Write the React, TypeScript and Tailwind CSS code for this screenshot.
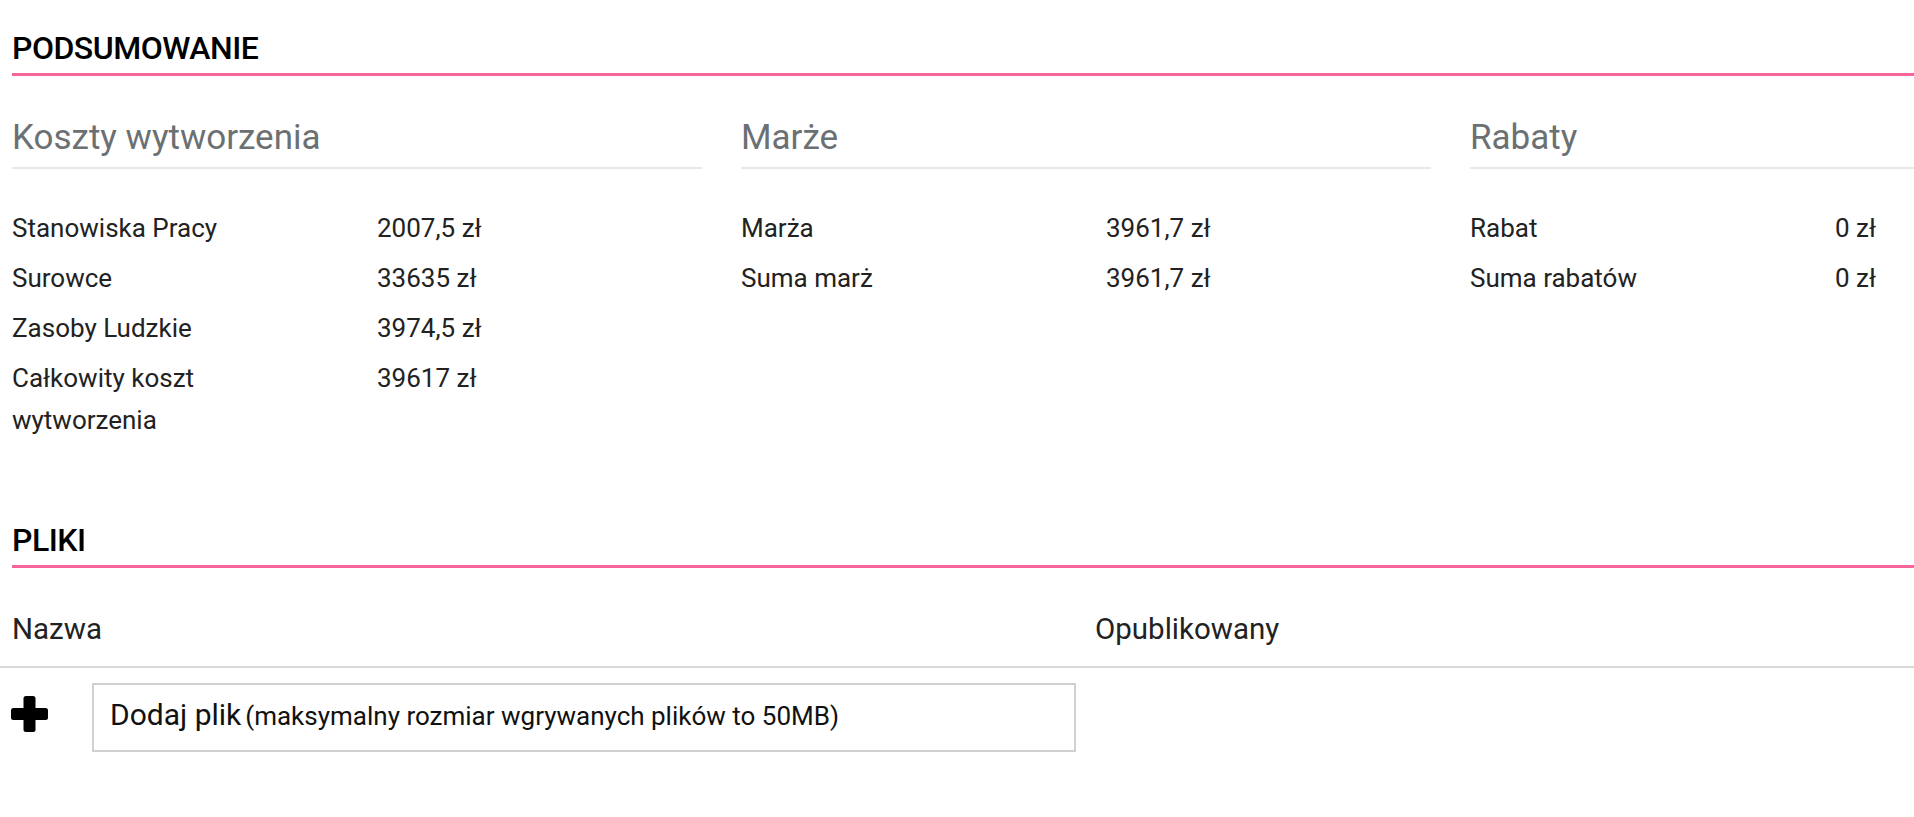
import React from "react";

type Row = { label: string; value: string };

const columns: { title: string; rows: Row[] }[] = [
  {
    title: "Koszty wytworzenia",
    rows: [
      { label: "Stanowiska Pracy", value: "2007,5 zł" },
      { label: "Surowce", value: "33635 zł" },
      { label: "Zasoby Ludzkie", value: "3974,5 zł" },
      { label: "Całkowity koszt wytworzenia", value: "39617 zł" },
    ],
  },
  {
    title: "Marże",
    rows: [
      { label: "Marża", value: "3961,7 zł" },
      { label: "Suma marż", value: "3961,7 zł" },
    ],
  },
  {
    title: "Rabaty",
    rows: [
      { label: "Rabat", value: "0 zł" },
      { label: "Suma rabatów", value: "0 zł" },
    ],
  },
];

function PlusIcon() {
  return (
    <svg width="37" height="36" viewBox="0 0 37 36" className="shrink-0 mb-[7px]">
      <rect x="12.5" y="0" width="12" height="36" rx="2.5" fill="#000" />
      <rect x="0" y="12" width="37" height="12" rx="2.5" fill="#000" />
    </svg>
  );
}

export default function App() {
  return (
    <div className="w-[1914px] h-[817px] overflow-hidden bg-white text-[#222] font-['Roboto','Liberation_Sans',sans-serif] pt-[28px]">
      <section className="pl-3">
        <h2 className="text-[32px] leading-[40px] font-medium tracking-[-0.5px] text-black pb-[5px] border-b-[3px] border-[#f7659b]">
          PODSUMOWANIE
        </h2>
        <div className="grid grid-cols-[690px_690px_690px] gap-x-[39px] mt-[42px] w-max">
          {columns.map((col) => (
            <div key={col.title}>
              <h3 className="text-[35px] leading-[40px] text-[#6b7072] pb-[9px] border-b-2 border-[#e8e8e8]">
                {col.title}
              </h3>
              <div className="mt-[34px]">
                {col.rows.map((r) => (
                  <div key={r.label} className="grid grid-cols-[365px_1fr] py-[4px] text-[26px] leading-[42px]">
                    <div className="pr-[64px]">{r.label}</div>
                    <div>{r.value}</div>
                  </div>
                ))}
              </div>
            </div>
          ))}
        </div>
      </section>

      <section className="mt-[75px]">
        <div className="pl-3">
          <h2 className="text-[32px] leading-[40px] font-medium tracking-[-0.5px] text-black pb-[5px] border-b-[3px] border-[#f7659b]">
            PLIKI
          </h2>
        </div>
        <div className="mt-[41px] flex px-3 text-[29.5px] leading-[40px] pb-[17px] border-b-2 border-[#d9d9d9]">
          <div className="w-[1083px]">Nazwa</div>
          <div>Opublikowany</div>
        </div>
        <div className="mt-[15px] flex items-center pl-[11px] gap-[44px]">
          <PlusIcon />
          <div className="w-[984px] h-[69px] border-2 border-[#d0d0d0] pl-4 flex items-center">
            <span className="leading-[40px] text-[#111]">
              <span className="text-[30px]">Dodaj plik</span>{" "}
              <span className="text-[26px]">(maksymalny rozmiar wgrywanych plików to 50MB)</span>
            </span>
          </div>
        </div>
      </section>
    </div>
  );
}
